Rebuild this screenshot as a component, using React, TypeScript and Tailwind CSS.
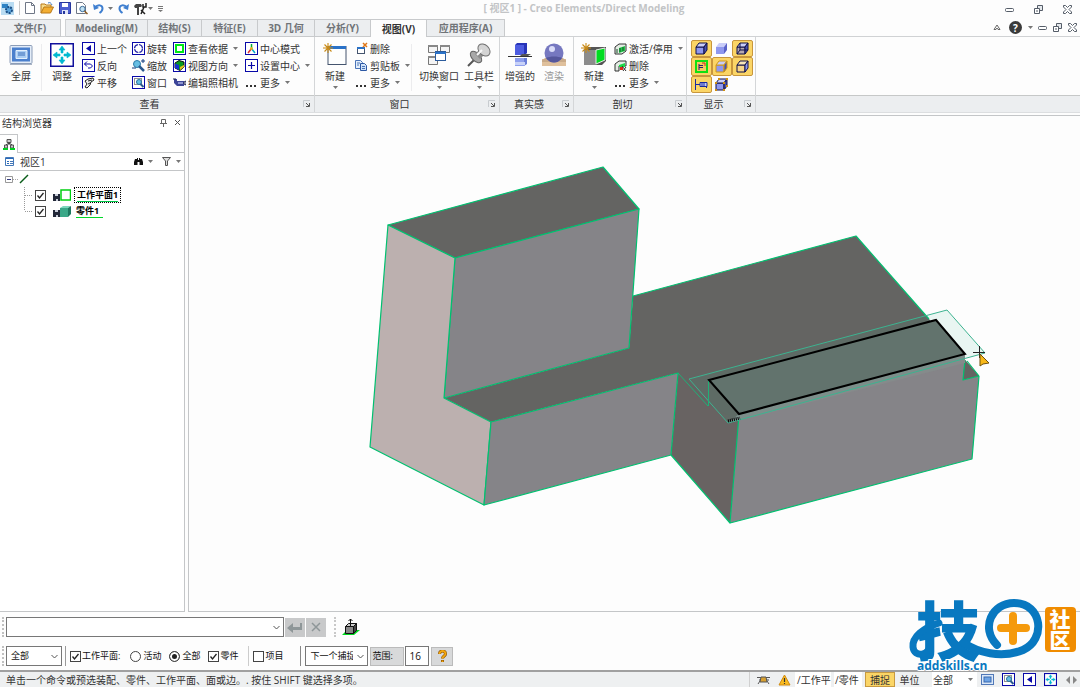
import React from "react";

type IconProps = { w: number; h: number; children: React.ReactNode };

/** Small toolbar drawing, one unit per pixel */
function Pic({ w, h, children }: IconProps) {
  return (
    <svg width={w} height={h} viewBox={`0 0 ${w} ${h}`} fill="none" className="shrink-0" aria-hidden="true">
      {children}
    </svg>
  );
}

function Caret() {
  return (
    <Pic w={5} h={3}>
      <path d="M0 0h5L2.5 3z" fill="#777" />
    </Pic>
  );
}

function Boxed({ children }: { children?: React.ReactNode }) {
  return (
    <Pic w={13} h={13}>
      <rect x=".5" y=".5" width="12" height="12" fill="#fff" stroke="#0808a8" />
      {children}
    </Pic>
  );
}

const fitArrows = (
  <path
    d="M12 3l3 4h-2v3h-2V7H9zM12 21l3-4h-2v-3h-2v3H9zM3 12l4-3v2h3v2H7v2zM21 12l-4-3v2h-3v2h3v2z"
    fill="#00b8d0"
    stroke="#00b8d0"
    strokeWidth=".6"
  />
);

function Star() {
  return <path d="M5 0v10M0 5h10M1.5 1.5l7 7M8.5 1.5l-7 7" stroke="#c98a16" strokeWidth="1.1" />;
}

function Cube({ front = "#8f98ee", top = "#c9cdf8", side = "#4850b0", line = "#10104a" }) {
  return (
    <g stroke={line} strokeLinejoin="round">
      <path d="M1 5h8v7H1z" fill={front} />
      <path d="M1 5l3-4h8L9 5z" fill={top} />
      <path d="M9 5l3-4v7l-3 4z" fill={side} />
    </g>
  );
}

const icons = {
  app: (
    <Pic w={13} h={13}>
      <rect width="13" height="13" fill="#b9dcf2" />
      <path d="M1 2h6v4H1z" fill="#2f83c4" />
      <circle cx="8" cy="8" r="3" fill="#5aa5dc" stroke="#1a4f86" strokeWidth="2" strokeDasharray="2 1" />
    </Pic>
  ),
  doc: (
    <Pic w={10} h={12}>
      <path d="M.5.5h6l3 3v8h-9z" fill="#fff" stroke="#6f7786" />
      <path d="M6.500.5v3h3" stroke="#6f7786" />
    </Pic>
  ),
  folder: (
    <Pic w={14} h={12}>
      <path d="M1 11V2h4l1 1h5v2" fill="#f8dc8c" stroke="#b87818" />
      <path d="M1 11l3-6h9.500l-3 6z" fill="#f3ae32" stroke="#b87818" />
      <path d="M8 1c2-1 3 0 4 2" stroke="#3b78c0" />
    </Pic>
  ),
  save: (
    <Pic w={12} h={12}>
      <path d="M.5.5h11v11h-11z" fill="#4d5fd0" stroke="#25359c" />
      <path d="M3 1h6v4H3z" fill="#fff" />
      <path d="M3 8h6v4H3z" fill="#dfe4f8" />
      <path d="M4 9h2v3H4z" fill="#25359c" />
    </Pic>
  ),
  preview: (
    <Pic w={12} h={13}>
      <path d="M.5.5h6l3 3v8h-9z" fill="#fff" stroke="#6f7786" />
      <circle cx="6.500" cy="7" r="2.700" fill="#bfe0f2" stroke="#3d6c98" />
      <path d="M8.500 9l3 3" stroke="#8a5a20" strokeWidth="1.500" />
    </Pic>
  ),
  undo: (
    <Pic w={11} h={11}>
      <path d="M2 4.500C5 1 9.500 2 9.500 5.500c0 2-1.500 3.500-3 4.500" stroke="#3f7fd0" strokeWidth="2" />
      <path d="M0 1l1 6 5-2z" fill="#3f7fd0" />
    </Pic>
  ),
  redo: (
    <Pic w={11} h={11}>
      <path d="M9 4.500C6 1 1.500 2 1.500 5.500c0 2 1.500 3.500 3 4.500" stroke="#3f7fd0" strokeWidth="2" />
      <path d="M11 1l-1 6-5-2z" fill="#3f7fd0" />
    </Pic>
  ),
  tool: (
    <Pic w={13} h={13}>
      <path d="M0 4l2-2h5l1 2-1 1H5v8H3V6L1 6z" fill="#444" />
      <path d="M7 12l3-7M9 2v3h3V1M7 8l4 4" stroke="#222" strokeWidth="1.500" />
    </Pic>
  ),
  fullscreen: (
    <Pic w={24} h={24}>
      <rect x="1" y="2.500" width="22" height="18" rx="1" fill="#e4edf8" stroke="#8c9db8" />
      <rect x="3" y="4.500" width="18" height="14" fill="#4b80cd" />
      <path d="M7 7.500h11v8H7z" fill="#a9cdf3" stroke="#e3f0fc" />
      <path d="M9 10h7M9 12h7" stroke="#3c6fb8" />
      <path d="M1 21.500h22" stroke="#a8b3c4" />
    </Pic>
  ),
  fit: (
    <Pic w={24} h={24}>
      <rect x=".75" y=".75" width="22.500" height="22.500" fill="#fff" stroke="#10109c" strokeWidth="1.500" />
      {fitArrows}
    </Pic>
  ),
  prev: (
    <Boxed>
      <path d="M9 3v7L4 6.500z" fill="#0808a8" />
    </Boxed>
  ),
  reverse: (
    <Boxed>
      <path d="M5 2.500L2.500 5 5 7.500M2.500 5H8.500l2 2-2 2H6" stroke="#0808a8" />
    </Boxed>
  ),
  pan: (
    <Pic w={13} h={13}>
      <path d="M.5 12.500V.5h12" stroke="#0808a8" />
      <path d="M3 5l3-2 5-1 1 2-3 2-1 3-3 3-2-1 2-3z" fill="#eee" stroke="#222" />
      <path d="M6 5l4-1M6 8l2-1" stroke="#222" />
    </Pic>
  ),
  rotate: (
    <Boxed>
      <circle cx="6.500" cy="6.500" r="4" stroke="#2828a8" strokeWidth="1.200" strokeDasharray="5.200 1.080" />
    </Boxed>
  ),
  zoom: (
    <Pic w={13} h={13}>
      <circle cx="5" cy="5" r="3.500" fill="#67bee3" stroke="#2b7ba8" />
      <path d="M7 7l5 5" stroke="#29588e" strokeWidth="2.500" />
      <path d="M9 2h4M11 0v4M0 9h4" stroke="#103a7c" />
    </Pic>
  ),
  windowZoom: (
    <Boxed>
      <path d="M2.500 2.500h7v6h-7z" stroke="#222" strokeDasharray="1 1" />
      <circle cx="7" cy="6" r="2.500" fill="#67bee3" stroke="#27709c" />
      <path d="M8.500 8l3 3" stroke="#29588e" strokeWidth="2" />
    </Boxed>
  ),
  workplane: (
    <Boxed>
      <rect x="3" y="3" width="7" height="7" fill="#fff" stroke="#00e818" strokeWidth="2" />
    </Boxed>
  ),
  direction: (
    <Boxed>
      <path d="M2 4l4-2.500L11 3v5l-4 3.500L2 9z" fill="#0b9a20" stroke="#111" />
      <path d="M2 4.500l4 1.500v5L2 9z" fill="#1730d0" />
      <path d="M7 8l4-2v2l-4 3z" fill="#e8c020" />
    </Boxed>
  ),
  camera: (
    <Pic w={13} h={13}>
      <path d="M1 3h3v2h7v5H4L1 7z" fill="#3c4598" />
      <path d="M0 3h3M11 6l2-1v4l-2-1z" stroke="#222850" />
      <path d="M5 6h5v2H5z" fill="#8d94cf" />
    </Pic>
  ),
  centerMode: (
    <Boxed>
      <path d="M6.500 6.500V2" stroke="#00b030" strokeWidth="1.500" />
      <path d="M6.500 6.500L3 11" stroke="#e03028" strokeWidth="1.500" />
      <path d="M6.500 6.500L10 11" stroke="#00a8c8" strokeWidth="1.500" />
      <circle cx="6.500" cy="6.500" r="1.500" fill="#e8b020" />
    </Boxed>
  ),
  setCenter: (
    <Boxed>
      <path d="M6.500 3v7M3 6.500h7" stroke="#0808a8" strokeWidth="1.200" />
    </Boxed>
  ),
  more: (
    <Pic w={13} h={13}>
      <path d="M1 9h2v2H1zM5 9h2v2H5zM9 9h2v2H9z" fill="#333" />
    </Pic>
  ),
  newWindow: (
    <Pic w={24} h={24}>
      <rect x="5" y="3.500" width="18" height="18" fill="#fdfefe" stroke="#44546e" />
      <path d="M5 3h18v3H5z" fill="#2a72c8" />
      <Star />
    </Pic>
  ),
  deleteWindow: (
    <Pic w={13} h={13}>
      <rect x="2.500" y="5.500" width="7" height="6" fill="#fff" stroke="#44546e" />
      <path d="M2 5h8v2H2z" fill="#2a72c8" />
      <path d="M8 1l4 4M12 1L8 5" stroke="#e07818" strokeWidth="1.500" />
    </Pic>
  ),
  clipboard: (
    <Pic w={13} h={13}>
      <path d="M.5 1.500h5l2 2v6h-7z" fill="#e4effb" stroke="#4a74b8" />
      <path d="M5.500 4.500h4l2 2v5h-6z" fill="#cfe2f8" stroke="#2c58a4" />
      <path d="M7 7.500h3M7 9.500h3M2 4h3M2 6h2" stroke="#4a74b8" />
    </Pic>
  ),
  switchWindow: (
    <Pic w={24} h={24}>
      <path d="M1.500 2.500h9v7h-9zM13.500 2.500h9v7h-9zM1.500 13.500h9v8h-9z" fill="#f4f4f4" stroke="#777" />
      <path d="M1 3h10M13 3h10M1 14h10" stroke="#888" strokeWidth="2" />
      <rect x="8.500" y="8.500" width="10" height="9" fill="#fff" stroke="#2c5c9c" />
      <path d="M8 9h11v2H8z" fill="#2a72c8" />
    </Pic>
  ),
  pin: (
    <Pic w={24} h={24}>
      <path d="M1 23l8-8" stroke="#555" strokeWidth="2" />
      <ellipse cx="9" cy="14" rx="4" ry="7" transform="rotate(-45 9 14)" fill="#a9a9a9" stroke="#666" />
      <path d="M8 11l7-7 5 5-7 7z" fill="#8d8d8d" />
      <ellipse cx="17" cy="7" rx="5" ry="7" transform="rotate(-45 17 7)" fill="#d4d4d4" stroke="#707070" />
      <path d="M10 12l5-5" stroke="#f8f8f8" strokeWidth="2" />
    </Pic>
  ),
  enhanced: (
    <Pic w={24} h={24}>
      <path d="M7 2l2-2h10v10l-2 2H7z" fill="#2734b8" />
      <path d="M7 2h9v10H7z" fill="#4d5ce0" />
      <path d="M0 13.500h24" stroke="#333" />
      <path d="M14 11h9l-3 2h-8z" fill="#555" />
      <path d="M7 15h9v8H7z" fill="#8fa0ee" />
      <path d="M16 15h3v6l-3 2z" fill="#6b7ed8" />
      <path d="M7 19h10v3H7z" fill="#c8d2f8" />
    </Pic>
  ),
  render: (
    <Pic w={26} h={24}>
      <path d="M1 16h24v7H1z" fill="#dfc09c" />
      <path d="M1 17l5-3h14l5 3v2H1z" fill="#c9aa88" />
      <circle cx="13" cy="10" r="9.500" fill="#7678c0" />
      <path d="M5 15a9.500 9.500 0 0 0 16 0c-4-2-12-2-16 0z" fill="#55579c" />
      <circle cx="11" cy="6" r="3" fill="#dadcf8" />
    </Pic>
  ),
  newClip: (
    <Pic w={26} h={24}>
      <path d="M3 7l4-3h18v14l-4 4H3z" fill="#555" />
      <path d="M3 7h12v15H3z" fill="#8c8c8c" />
      <path d="M15 7l9-2v12l-9 4z" fill="#00dc20" stroke="#e8e8e8" />
      <Star />
    </Pic>
  ),
  clipToggle: (
    <Pic w={13} h={13}>
      <path d="M1 5l4-3h7v7l-4 3H1z" fill="#e4ece4" stroke="#333" />
      <path d="M5 6l6-2v5l-6 2z" fill="#20c848" />
      <path d="M3 7v4M6 6v4M9 5v4" stroke="#174f28" />
    </Pic>
  ),
  clipDelete: (
    <Pic w={13} h={13}>
      <path d="M1 5l4-3h7v5H5v5H1z" fill="#e4ece4" stroke="#333" />
      <path d="M5 6l6-2v4H5z" fill="#20d848" />
      <path d="M6 8h3v3H6z" fill="#e02818" />
      <path d="M8 7l4 5M12 8l-3 4" stroke="#333" />
    </Pic>
  ),
  shaded: (
    <Pic w={13} h={13}>
      <Cube />
    </Pic>
  ),
  shadedPlain: (
    <Pic w={13} h={13}>
      <Cube line="none" side="#5a62c8" />
    </Pic>
  ),
  wire: (
    <Pic w={13} h={13}>
      <Cube front="#b5a8b0" />
      <path d="M4 1v7h8M4 8l-3 4" stroke="#10104a" />
    </Pic>
  ),
  showPlane: (
    <Pic w={15} h={15}>
      <rect x="2" y="2" width="11" height="11" fill="#f6c860" stroke="#10e010" strokeWidth="2" />
      <path d="M5 5v6M5 6.500h4M5 8.500h4" stroke="#28206c" />
      <path d="M8 4h3v3" stroke="#c03020" />
    </Pic>
  ),
  edgeless: (
    <Pic w={13} h={13}>
      <Cube line="#d39a10" />
    </Pic>
  ),
  hidden: (
    <Pic w={13} h={13}>
      <Cube front="#f6d488" side="#8f98ee" top="#f6e4b8" />
    </Pic>
  ),
  label: (
    <Pic w={15} h={13}>
      <path d="M1.500 1v11M2 6.500h4M12.500 4v6" stroke="#1a2aa0" />
      <path d="M6 4.500h7v4H6z" fill="#c8ccf8" stroke="#1a2aa0" />
      <path d="M8 5v4M10 5v4" stroke="#1a2aa0" />
    </Pic>
  ),
  vertices: (
    <Pic w={13} h={13}>
      <Cube />
      <path d="M0 4h2v2H0zM8 4h2v2H8zM3 0h2v2H3zM11 0h2v2h-2zM0 11h2v2H0zM8 11h2v2H8zM11 7h2v2h-2z" fill="#d09010" />
    </Pic>
  ),
};

type IconName = keyof typeof icons;

function Small({ icon, text, menu }: { icon: IconName; text: string; menu?: boolean }) {
  return (
    <button className="flex h-[17px] items-center gap-[2px] whitespace-nowrap">
      {icons[icon]}
      <span>{text}</span>
      {menu && (
        <span className="pl-[3px]">
          <Caret />
        </span>
      )}
    </button>
  );
}

function Stack({ items, className }: { items: [IconName, string, boolean?][]; className: string }) {
  return (
    <div className={`flex shrink-0 flex-col ${className}`}>
      {items.map(([icon, text, menu]) => (
        <Small key={text} icon={icon} text={text} menu={menu} />
      ))}
    </div>
  );
}

function Big({ icon, text, menu, dim }: { icon: IconName; text: string; menu?: boolean; dim?: boolean }) {
  return (
    <button className="flex w-10 shrink-0 flex-col items-center whitespace-nowrap pt-[3px]">
      {icons[icon]}
      <span className={dim ? "mt-[3px] leading-3 text-[#999]" : "mt-[3px] leading-3"}>{text}</span>
      {menu && (
        <span className="mt-1">
          <Caret />
        </span>
      )}
    </button>
  );
}

function Group({ title, className, children }: { title: string; className: string; children: React.ReactNode }) {
  return (
    <section className={`flex shrink-0 flex-col border-r border-[#d4d6d8] ${className}`}>
      <div className="flex h-[58px] pt-[3px]">{children}</div>
      <div className="flex h-[17px] items-center border-t border-[#c6c8c8] bg-[#eceef0] pb-px pr-1">
        <span className="flex-1 pr-1 text-center">{title}</span>
        <button aria-label={`${title} 选项`}>
          <Pic w={7} h={7}>
            <path d="M.5 7V.5H7" stroke="#c8ccd0" />
            <path d="M3 3l3 3M6.500 3v3.500H3" stroke="#555" />
          </Pic>
        </button>
      </div>
    </section>
  );
}

function Divider() {
  return <span className="my-1 w-px shrink-0 bg-[#ececee]" />;
}

const tabs = [
  { name: "Modeling(M)", width: "w-[82px]" },
  { name: "结构(S)", width: "w-[54px]" },
  { name: "特征(E)", width: "w-14" },
  { name: "3D 几何", width: "w-[57px]" },
  { name: "分析(Y)", width: "w-14" },
  { name: "视图(V)", width: "w-14", active: true },
  { name: "应用程序(A)", width: "w-[78px]" },
];

const display: { icon: IconName; on: boolean; name: string }[] = [
  { icon: "shaded", on: true, name: "着色" },
  { icon: "shadedPlain", on: false, name: "无边" },
  { icon: "wire", on: true, name: "线框" },
  { icon: "showPlane", on: true, name: "工作平面" },
  { icon: "edgeless", on: true, name: "边" },
  { icon: "hidden", on: true, name: "隐藏线" },
  { icon: "label", on: true, name: "标签" },
  { icon: "vertices", on: false, name: "顶点" },
];

function WinButtons({ className }: { className: string }) {
  return (
    <div className={`flex items-center ${className}`}>
      <button aria-label="最小化">
        <Pic w={9} h={9}>
          <rect x=".5" y="3.500" width="8" height="3" rx="1" fill="#fff" stroke="#555d68" />
        </Pic>
      </button>
      <button aria-label="还原">
        <Pic w={9} h={9}>
          <path d="M3.500.5h5v5h-5z" fill="#e4e8ec" stroke="#555d68" />
          <path d="M.5 3.500h5v5h-5z" fill="#fff" stroke="#555d68" />
          <path d="M2 6h2" stroke="#555d68" />
        </Pic>
      </button>
      <button aria-label="关闭">
        <Pic w={9} h={9}>
          <path d="M.5.5h2l2 2 2-2h2v1.500L6 4.500l2.500 2.500v1.500h-2l-2-2-2 2h-2V7L3 4.500.5 2z" fill="#fff" stroke="#555d68" />
        </Pic>
      </button>
    </div>
  );
}

function TitleBar() {
  return (
    <header className="flex h-[19px] shrink-0 items-center">
      <div className="flex w-[168px] shrink-0 items-center gap-[5px] pb-[3px] pl-px">
        {icons.app}
        <span className="h-[14px] w-px bg-[#c8c8c8]" />
        <button aria-label="新建">{icons.doc}</button>
        <button aria-label="打开">{icons.folder}</button>
        <button aria-label="保存">{icons.save}</button>
        <button aria-label="预览">{icons.preview}</button>
        <button className="flex items-center gap-1" aria-label="撤消">
          {icons.undo}
          <Caret />
        </button>
        <button aria-label="重做">{icons.redo}</button>
        <button className="flex items-center gap-px" aria-label="工具">
          {icons.tool}
          <Caret />
        </button>
        <button aria-label="自定义">
          <Pic w={5} h={7}>
            <path d="M0 1.500h5M0 3.500h5" stroke="#777" />
            <path d="M0 5h5L2.500 7z" fill="#777" />
          </Pic>
        </button>
      </div>
      <h1 className="flex-1 whitespace-nowrap pb-[3px] pr-1 text-center font-bold text-[#c2c4c6]">
        [ 视区1 ] - Creo Elements/Direct Modeling
      </h1>
      <WinButtons className="w-[76px] gap-5 pl-px" />
    </header>
  );
}

function TabBar() {
  return (
    <nav className="flex h-[18px] shrink-0 items-stretch font-bold text-[#707478]">
      <button className="w-[61px] border border-l-0 border-[#c8cacc] bg-[#eceef0]">文件(F)</button>
      <span className="w-[5px] border-b border-r border-[#d0d2d4]" />
      {tabs.map((tab) => (
        <button
          key={tab.name}
          className={`${tab.width} shrink-0 whitespace-nowrap border-r border-t border-[#c8cacc] ${
            tab.active ? "bg-[#fdfdfd] text-[#333]" : "border-b bg-[#eceef0]"
          }`}
        >
          {tab.name}
        </button>
      ))}
      <div className="flex flex-1 items-center justify-end gap-2 border-b border-[#d0d2d4] pr-[3px]">
        <button aria-label="折叠功能区">
          <Pic w={8} h={7}>
            <path d="M1 5.500L4 1l3 4.500H5L4 4 3 5.500z" stroke="#666" />
          </Pic>
        </button>
        <div className="flex items-center gap-[5px]">
          <button className="flex items-center gap-[6px]" aria-label="帮助">
            <span className="flex h-[13px] w-[13px] items-center justify-center rounded-full bg-[#3a3a3a] text-white">
              ?
            </span>
            <Caret />
          </button>
          <WinButtons className="gap-[6px]" />
        </div>
      </div>
    </nav>
  );
}

function Ribbon() {
  return (
    <div className="flex shrink-0 border-b border-[#dcdee0]">
      <Group title="查看" className="w-[315px]">
        <div className="flex pl-px">
          <Big icon="fullscreen" text="全屏" />
          <Divider />
          <Big icon="fit" text="调整" />
        </div>
        <Stack className="w-[50px]" items={[["prev", "上一个"], ["reverse", "反向"], ["pan", "平移"]]} />
        <Stack className="w-[41px]" items={[["rotate", "旋转"], ["zoom", "缩放"], ["windowZoom", "窗口"]]} />
        <Stack
          className="w-[72px]"
          items={[["workplane", "查看依据", true], ["direction", "视图方向", true], ["camera", "编辑照相机"]]}
        />
        <Stack className="w-[67px]" items={[["centerMode", "中心模式"], ["setCenter", "设置中心", true], ["more", "更多", true]]} />
      </Group>
      <Group title="窗口" className="w-[185px]">
        <Big icon="newWindow" text="新建" menu />
        <Stack
          className="w-14"
          items={[["deleteWindow", "删除"], ["clipboard", "剪贴板", true], ["more", "更多", true]]}
        />
        <Divider />
        <div className="flex pl-[7px]">
          <Big icon="switchWindow" text="切换窗口" menu />
          <Big icon="pin" text="工具栏" menu />
        </div>
      </Group>
      <Group title="真实感" className="w-[74px]">
        <Big icon="enhanced" text="增强的" />
        <div className="-ml-[6px] flex">
          <Big icon="render" text="渲染" dim />
        </div>
      </Group>
      <Group title="剖切" className="w-[113px]">
        <Big icon="newClip" text="新建" menu />
        <Stack className="w-[72px]" items={[["clipToggle", "激活/停用", true], ["clipDelete", "删除"], ["more", "更多", true]]} />
      </Group>
      <Group title="显示" className="w-[69px]">
        <div className="grid h-[53px] w-[66px] grid-cols-3 pl-1">
          {display.map((d) => (
            <button
              key={d.icon}
              aria-label={d.name}
              aria-pressed={d.on}
              className={
                d.on
                  ? "flex items-center justify-center rounded-xs border border-[#c8963c] bg-[#fbd566]"
                  : "flex items-center justify-center"
              }
            >
              {icons[d.icon]}
            </button>
          ))}
        </div>
      </Group>
      <div className="flex flex-1 flex-col">
        <div className="h-[58px]" />
        <div className="h-[17px] border-t border-[#c6c8c8] bg-[#eceef0]" />
      </div>
    </div>
  );
}

function Tick({ id, checked, text }: { id: string; checked?: boolean; text?: string }) {
  return (
    <label htmlFor={id} className="flex items-center gap-px whitespace-nowrap">
      <span className="grid">
        <input
          id={id}
          type="checkbox"
          defaultChecked={checked}
          aria-label={text ? undefined : id}
          className="peer col-start-1 row-start-1 size-[11px] appearance-none border border-[#444] bg-white"
        />
        <svg
          viewBox="0 0 11 11"
          fill="none"
          className="pointer-events-none invisible col-start-1 row-start-1 size-[11px] peer-checked:visible"
        >
          <path d="M2.500 5.500l2 2.500 4-5" stroke="#222" strokeWidth="1.300" />
        </svg>
      </span>
      {text}
    </label>
  );
}

function Radio({ text, checked }: { text: string; checked?: boolean }) {
  return (
    <label className="flex items-center gap-[2px] whitespace-nowrap">
      <input
        type="radio"
        name="scope"
        defaultChecked={checked}
        className="size-[11px] appearance-none rounded-full border border-[#444] bg-white checked:bg-[#222] checked:shadow-[inset_0_0_0_2px_white]"
      />
      {text}
    </label>
  );
}

function Drop({ label, value, className }: { label: string; value: string; className: string }) {
  return (
    <span className={`grid shrink-0 items-center border border-[#777] bg-white ${className}`}>
      <select
        aria-label={label}
        className="col-start-1 row-start-1 h-full w-full min-w-0 appearance-none pl-1 pr-[14px]"
      >
        <option>{value}</option>
      </select>
      <span className="pointer-events-none col-start-1 row-start-1 justify-self-end pr-[3px]">
        <Pic w={7} h={5}>
          <path d="M.5 1l3 3 3-3" stroke="#555" />
        </Pic>
      </span>
    </span>
  );
}

const disk = (
  <>
    <path d="M0 5h7v7H0z" fill="#222838" />
    <path d="M2 5h3v2H2z" fill="#c8ccd8" />
    <path d="M3 10h2v2H3z" fill="#c8ccd8" />
  </>
);

function Sidebar() {
  return (
    <aside className="flex w-[185px] shrink-0 flex-col border border-l-0 border-[#c4c6c8] bg-white">
      <div className="flex h-[18px] items-center gap-[7px] pb-[5px] pl-[2px] pr-[3px]">
        <h2 className="flex-1">结构浏览器</h2>
        <button aria-label="固定">
          <Pic w={7} h={8}>
            <path d="M1.500.5h4v4h-4zM0 4.500h7M3.500 5v3" stroke="#666" />
          </Pic>
        </button>
        <button aria-label="关闭浏览器">
          <Pic w={7} h={7}>
            <path d="M1 1l5 5M6 1L1 6" stroke="#555" />
          </Pic>
        </button>
      </div>
      <div className="flex h-[19px]">
        <button aria-label="结构" className="flex w-[18px] items-center justify-center border-r border-t border-[#c4c6c8]">
          <Pic w={12} h={12}>
            <path d="M4 1.500h4v3H4zM1.500 7h3v3h-3zM7.500 7h3v3h-3z" fill="#ccc" stroke="#555" />
            <path d="M6 5v2M3 7l3-2 3 2" stroke="#333" />
            <path d="M0 11h5M7 11h5" stroke="#00d020" strokeWidth="2" />
          </Pic>
        </button>
        <span className="flex-1 border-b border-[#c4c6c8]" />
      </div>
      <div className="flex h-[18px] items-center border-b border-[#c4c6c8] pl-[5px] pr-[3px]">
        <Pic w={9} h={9}>
          <path d="M.5.5h8v8h-8z" fill="#fff" stroke="#4478b8" />
          <path d="M1 1h7v1H1zM2 4h2v1H2zM2 6h2v1H2z" fill="#2868b8" />
          <path d="M5 4.500h3M5 6.500h3" stroke="#4478b8" />
        </Pic>
        <span className="flex-1 pl-[6px]">视区1</span>
        <button aria-label="查找" className="flex items-center gap-[5px]">
          <Pic w={9} h={9}>
            <path d="M1 2h2V1h1v2h1V1h1v1h2l1 3v3H5.500V5h-2v3H0V5z" fill="#111" />
          </Pic>
          <Caret />
        </button>
        <button aria-label="筛选" className="flex items-center gap-[5px] pl-[9px]">
          <Pic w={9} h={9}>
            <path d="M.5.5h8L5.500 4v4.500h-2V4z" fill="#ddd" stroke="#555" />
          </Pic>
          <Caret />
        </button>
      </div>
      <div className="flex flex-1 flex-col text-[9px] font-bold text-black">
        <div className="flex h-4 items-center pl-[5px]">
          <Pic w={24} h={10}>
            <path d="M.5 2.500h7v6h-7z" fill="#fff" stroke="#999" />
            <path d="M2 5.500h4" stroke="#333a80" />
            <path d="M8 5.500h5" stroke="#aaa" strokeDasharray="1 1" />
            <path d="M15 9l8-8" stroke="#085c18" strokeWidth="1.500" />
          </Pic>
        </div>
        <div className="flex h-4 items-center pl-[24px]">
          <Pic w={11} h={16}>
            <path d="M.5 0v16M1 8.500h7" stroke="#999" strokeDasharray="1 1" />
          </Pic>
          <Tick id="workplane-1" checked />
          <span className="flex pl-[7px]">
            <Pic w={18} h={12}>
              {disk}
              <rect x="8" y="1" width="9.500" height="10" fill="#fff" stroke="#00d010" strokeWidth="1.500" />
            </Pic>
          </span>
          <button className="ml-[3px] flex h-4 items-center border border-dotted border-black px-[2px]">
            <span className="border-b border-[#00c848] leading-3">工作平面1</span>
          </button>
        </div>
        <div className="flex h-4 items-center pl-[24px]">
          <Pic w={11} h={16}>
            <path d="M.5 0v8M1 8.500h7" stroke="#999" strokeDasharray="1 1" />
          </Pic>
          <Tick id="part-1" checked />
          <span className="flex pl-[7px]">
            <Pic w={18} h={12}>
              {disk}
              <path d="M7 3h8v9H7z" fill="#3aa888" />
              <path d="M7 3l3-2h8l-3 2z" fill="#7cd8bc" />
              <path d="M15 3l3-2v8l-3 3z" fill="#1d7860" />
            </Pic>
          </span>
          <button className="ml-[3px] flex h-4 items-center pl-[2px]">
            <span className="border-b border-[#00d828] pr-1 leading-3">零件1</span>
          </button>
        </div>
      </div>
    </aside>
  );
}

/** Shaded part with the active work plane and the rectangle being extruded */
function Model() {
  return (
    <svg viewBox="189 116 891 495" className="h-full w-full" fill="none" role="img" aria-label="零件1">
      <path d="M678 373L739 390 739 420 730 523 671 455z" fill="#686362" />
      <path d="M444 398L629 348 633 296 856 236 929 319 979 376 739 420 708 406 678 373 491 422z" fill="#646462" />
      <path d="M739 414L965 354 963 380 979 376 972 459 730 523z" fill="#858488" />
      <path d="M965 360l14 16-16 4z" fill="#646462" />
      <g stroke="#00c070" strokeWidth="1.200" strokeLinejoin="round">
        <path d="M633 296L856 236 929 319" />
        <path d="M388 225L603 167 639 209 455 258z" fill="#646462" />
        <path d="M455 258L639 209 629 348 444 398z" fill="#858488" />
        <path d="M388 225L455 258 444 398 491 422 484 505 370 447z" fill="#bcb0af" />
        <path d="M491 422L678 373 671 455 484 505z" fill="#858488" />
        <path d="M671 455L730 523 739 415M730 523L972 459 979 376 963 380 965 360M967 361L979 376" />
      </g>
      <path d="M739 414L965 354v9L728 423z" fill="#858b8b" />
      <path d="M689 379L947 310 985 353 728 423z" fill="#24b488" fillOpacity=".09" stroke="#3db390" />
      <path d="M678 373l30 33M708.500 381v25" stroke="#20b078" />
      <path d="M709 380L936 320 965 354 739 414z" fill="#62736d" stroke="#000" strokeWidth="2" />
      <path d="M728 421l12-3" stroke="#000" strokeWidth="3" strokeDasharray="1 1" />
      <path d="M973 352.500h12M979.500 346v12" stroke="#222" />
      <path d="M980 354v12l3-2 6-1z" fill="#f8b818" stroke="#70500c" />
    </svg>
  );
}

function CommandBar() {
  return (
    <div className="flex h-[30px] shrink-0 items-center pl-[2px]">
      <span className="h-5 w-[2px] border-l-2 border-dotted border-[#c0c0c0]" />
      <Drop label="命令" value="" className="ml-[2px] h-5 w-[278px]" />
      <button aria-label="确定" className="ml-px flex h-[19px] w-5 items-center justify-center bg-[#c8c9ca]">
        <Pic w={16} h={11}>
          <path d="M0 6l6-5v4h7V1h2v7H6v3z" fill="#8e9698" />
        </Pic>
      </button>
      <button aria-label="取消" className="ml-px flex h-[19px] w-5 items-center justify-center bg-[#c8c9ca]">
        <Pic w={10} h={10}>
          <path d="M1 1l8 8M9 1L1 9" stroke="#8e9698" strokeWidth="1.500" />
        </Pic>
      </button>
      <span className="ml-2 mr-[5px] h-5 w-[2px] border-l-2 border-dotted border-[#c8c8c8]" />
      <button aria-label="拉伸">
        <Pic w={20} h={19}>
          <path d="M1 17l5-5h13l-6 5z" fill="#00d820" />
          <path d="M4.500 8.500h8v7h-8z" fill="#888" stroke="#111" />
          <path d="M4.500 8.500l3-3h8l-3 3z" fill="#ccc" stroke="#111" />
          <path d="M12.500 8.500l3-3v7l-3 3z" fill="#444" stroke="#111" />
          <path d="M9.500 8V1M7.500 3l2-2 2 2" stroke="#111" />
        </Pic>
      </button>
    </div>
  );
}

function FilterBar() {
  return (
    <div className="flex h-7 shrink-0 items-center pl-[2px] text-[9px] text-[#111]">
      <span className="h-5 w-[2px] border-l-2 border-dotted border-[#c0c0c0]" />
      <Drop label="筛选" value="全部" className="ml-[2px] h-5 w-14" />
      <span className="ml-[3px] mr-1 h-5 w-px bg-[#999]" />
      <Tick id="f-plane" checked text="工作平面:" />
      <div className="flex gap-2 pl-[10px]">
        <Radio text="活动" />
        <Radio text="全部" checked />
        <Tick id="f-part" checked text="零件" />
      </div>
      <span className="ml-[10px] mr-1 h-5 w-px bg-[#ccc]" />
      <Tick id="f-item" text="项目" />
      <span className="ml-[17px] mr-1 h-5 w-px bg-[#888]" />
      <Drop label="捕捉方式" value="下一个捕捉" className="h-5 w-[63px]" />
      <label htmlFor="range" className="ml-[2px] flex h-[19px] w-[34px] items-center border border-[#bbb] bg-[#d8d9da] pl-px">
        范围:
      </label>
      <input id="range" defaultValue="16" className="ml-px h-5 w-6 border border-[#777] bg-white pl-[3px] text-[10px]" />
      <button
        aria-label="查询"
        className="ml-[2px] flex h-[19px] w-[22px] items-center justify-center border border-[#bbb] bg-[#d8d9da]"
      >
        <Pic w={9} h={13}>
          <path d="M1.500 4c0-4 6-4 6 0 0 2-3 2-3 4.500M4.500 10v2" stroke="#8a5000" strokeWidth="3" />
          <path d="M1.500 4c0-4 6-4 6 0 0 2-3 2-3 4.500M4.500 10.500v1.500" stroke="#f4a810" strokeWidth="1.800" />
        </Pic>
      </button>
    </div>
  );
}

function StatusBar() {
  return (
    <footer className="flex h-[17px] shrink-0 items-center border-t-2 border-[#a0a0a0] bg-[#eef0f1]">
      <p className="min-w-0 flex-1 truncate pl-[6px]">
        单击一个命令或预选装配、零件、工作平面、面或边。. 按住 SHIFT 键选择多项。
      </p>
      <div className="flex h-full w-[331px] shrink-0 items-center whitespace-nowrap border-l border-[#d0d0d0] pl-[7px]">
        <Pic w={13} h={10}>
          <path d="M0 2.500h5M8 2.500h5M2 5h10M1 9l2-3M12 9l-2-3" stroke="#555" />
          <path d="M4 2h5l1 5H3z" fill="#d8a030" stroke="#555" />
        </Pic>
        <span className="pl-2">
          <Pic w={13} h={12}>
            <path d="M6.500 1L12 11H1z" fill="#fbbc20" stroke="#d08a10" strokeLinejoin="round" />
            <path d="M6.500 4v4M6.500 9v1" stroke="#333" strokeWidth="1.200" />
          </Pic>
        </span>
        <button className="ml-1 h-full w-9 bg-white pl-[2px] text-left">/工作平</button>
        <button className="ml-[3px] h-full w-7 bg-white pl-px text-left">/零件</button>
        <button className="ml-[3px] h-full w-[30px] border border-[#c89a40] bg-[#fbd566]">捕捉</button>
        <button className="w-[29px]">单位</button>
        <span className="ml-[8px] grid h-full w-[45px] items-center bg-white">
          <select aria-label="选择范围" className="col-start-1 row-start-1 appearance-none pl-px">
            <option>全部</option>
          </select>
          <span className="pointer-events-none col-start-1 row-start-1 justify-self-end pr-1">
            <Caret />
          </span>
        </span>
        <div className="flex flex-1 items-center justify-between pl-1 pr-[2px]">
          <button aria-label="全屏">
            <Pic w={13} h={13}>
              <rect x=".5" y="1.500" width="12" height="10" fill="#dbe8f8" stroke="#5078b8" />
              <rect x="3" y="4" width="7" height="5" fill="#6fa4e4" stroke="#3868b0" />
            </Pic>
          </button>
          <button aria-label="窗口缩放">{icons.windowZoom}</button>
          <button aria-label="上一个视图">{icons.prev}</button>
          <button aria-label="调整视图">
            <svg width="13" height="13" viewBox="0 0 24 24" fill="none">
              <rect x="1" y="1" width="22" height="22" fill="#fff" stroke="#0808a8" strokeWidth="2" />
              {fitArrows}
            </svg>
          </button>
          <button aria-label="滚动">
            <Pic w={13} h={10}>
              <path d="M5 1v8L1 5zM8 1v8l4-4z" fill="#888" />
            </Pic>
          </button>
        </div>
      </div>
    </footer>
  );
}

function Watermark() {
  return (
    <svg
      width="175"
      height="76"
      viewBox="905 597 175 76"
      fill="none"
      className="pointer-events-none absolute bottom-[14px] right-0 overflow-visible font-['Noto_Sans_CJK_SC',sans-serif] font-black"
    >
      <text x="916" y="655" fontSize="64" fill="#0878c0">
        技
      </text>
      <g stroke="#0878c0" strokeWidth="8" strokeLinecap="round">
        <path d="M939 623C923 628 912 637 913 647C914 658 930 656 930 644" strokeWidth="7" />
        <path d="M997 645C980 628 992 603 1014 603C1043 603 1046 640 1023 650C1001 659 977 652 964 643" />
      </g>
      <path d="M1013 616v25M1001 628h25" stroke="#f59a0c" strokeWidth="8" strokeLinecap="round" />
      <rect x="1045" y="607" width="31" height="45" rx="4" fill="#f08c00" />
      <text x="1060" y="609" fontSize="21" fill="#fff" writingMode="vertical-rl">
        社区
      </text>
      <text
        x="917"
        y="670"
        fontSize="12"
        fill="#0878c0"
        stroke="#fff"
        strokeWidth="2"
        paintOrder="stroke"
        className="font-['Open_Sans',sans-serif] font-bold"
      >
        addskills.cn
      </text>
    </svg>
  );
}

export default function App() {
  return (
    <div className="relative flex h-screen flex-col overflow-hidden bg-[#fdfdfd] font-['Open_Sans','Noto_Sans_CJK_SC',sans-serif] text-[10px] leading-3 text-[#333]">
      <TitleBar />
      <TabBar />
      <Ribbon />
      <main className="mt-[2px] flex min-h-0 flex-1 gap-[3px]">
        <Sidebar />
        <div className="min-w-0 flex-1 border border-r-0 border-[#c4c6c8]">
          <Model />
        </div>
      </main>
      <CommandBar />
      <FilterBar />
      <StatusBar />
      <Watermark />
    </div>
  );
}
